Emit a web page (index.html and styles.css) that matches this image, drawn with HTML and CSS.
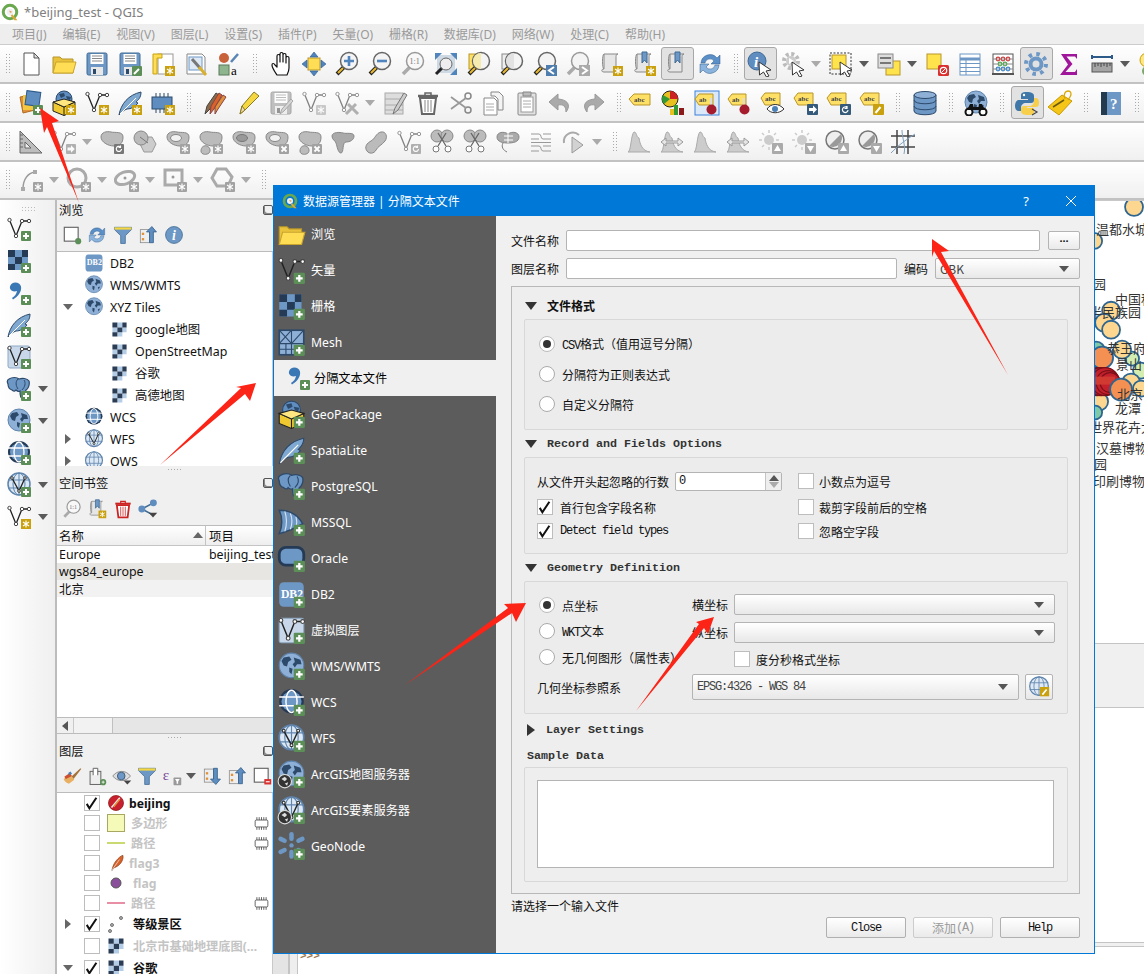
FILE: index.html
```html
<!DOCTYPE html>
<html lang="zh">
<head>
<meta charset="utf-8">
<title>*beijing_test - QGIS</title>
<link rel="stylesheet" href="styles.css">
</head>
<body>
<svg class="defs" aria-hidden="true"><defs>
<g id="ad"><rect x="15" y="15" width="10" height="10" rx="1" fill="#5c8f58"/><path d="M20 17v6M17 20h6" stroke="#fff" stroke-width="2"/></g>
<g id="st"><rect x="15" y="15" width="10" height="10" fill="#c9a00d"/><path d="M20 16.5v7M17 18l6 4M23 18l-6 4" stroke="#fff" stroke-width="1.2"/></g>
<g id="gs"><rect x="15" y="15" width="10" height="10" rx="1" fill="#a2a2a2"/><path d="M20 16.5v7M17 18l6 4M23 18l-6 4" stroke="#fff" stroke-width="1.2"/></g>
<g id="gx"><rect x="15" y="15" width="10" height="10" rx="1" fill="#a2a2a2"/><path d="M17.5 17.5l5 5M22.5 17.5l-5 5" stroke="#fff" stroke-width="1.8"/></g>
<g id="gr"><rect x="15" y="15" width="10" height="10" rx="1" fill="#777"/><path d="M22.5 20a2.6 2.6 0 1 1-1-2.2M21.5 16.5v2h-2" stroke="#fff" stroke-width="1.2" fill="none"/></g>
<g id="gar"><rect x="15" y="15" width="10" height="10" rx="1" fill="#777"/><path d="M16.5 18.5h3.5v-2.3l3.8 3.8-3.8 3.8v-2.3h-3.5z" fill="#fff"/></g>
<g id="new"><path d="M6 2h10l5 5v17H6z" fill="#fff" stroke="#555"/><path d="M16 2v5h5z" fill="#ddd" stroke="#555"/></g>
<g id="open"><path d="M2 22V6h7l2 2h11v14z" fill="#e8c23a" stroke="#b8952a"/><path d="M2 22l3-11h20l-3 11z" fill="#ffdd55" stroke="#c9a52e"/></g>
<g id="save"><rect x="3" y="2" width="20" height="22" rx="1.5" fill="#6d97c4" stroke="#3f6a94"/><rect x="6.5" y="3" width="13" height="10" fill="#fff"/><path d="M8 5h10M8 7.5h10M8 10h10" stroke="#888"/><rect x="7" y="16" width="12" height="8" fill="#e8e8e8"/><rect x="9" y="18" width="3" height="5" fill="#2d4a6b"/></g>
<g id="saveas"><use href="#save"/><rect x="15" y="15" width="10" height="10" rx="1" fill="#5c8f58"/><path d="M17 23l5-5" stroke="#fff" stroke-width="2"/></g>
<g id="layout"><rect x="8" y="3" width="15" height="20" fill="#fff" stroke="#999"/><path d="M3 3h9v4H7v16H3z" fill="#ffdd55" stroke="#c9a20c"/><use href="#st"/></g>
<g id="manager"><path d="M4 3h15l3 3v17H4z" fill="#fff" stroke="#888"/><rect x="6" y="6" width="13" height="13" fill="#dfe9f5" stroke="#6d97c4"/><path d="M9 8l8 9" stroke="#777" stroke-width="3"/><path d="M16 16l7 8" stroke="#d8b030" stroke-width="3"/></g>
<g id="style"><circle cx="8" cy="7" r="5" fill="#c8623a"/><path d="M15 11l7-8" stroke="#5a86b5" stroke-width="2.5"/><rect x="3" y="14" width="10" height="10" fill="#8fb58f" stroke="#5a7a5a"/><text x="15" y="24" class="ic" font-size="13">a</text></g>
<g id="pan"><path d="M9 24c-2-3-5-7-5-10 0-2 2-2 3 0l2 2V5c0-2 3-2 3 0v6V3c0-2 3-2 3 0v8V4c0-2 3-2 3 0v8V7c0-2 3-2 3 0v10c0 3-1 5-2 7z" fill="#fff" stroke="#111" stroke-width="1.2" stroke-linejoin="round"/></g>
<g id="move"><rect x="7" y="7" width="12" height="12" fill="#ffdd55" stroke="#b8952a"/><path d="M13 1l4 5H9zM13 25l4-5H9zM1 13l5-4v8zM25 13l-5-4v8z" fill="#4f84bd" stroke="#2d5a88" stroke-width=".6"/></g>
<g id="lens"><path d="M10 16l-7 7" stroke="#222" stroke-width="4"/><path d="M9 17l-5 5" stroke="#e5b830" stroke-width="2.2"/><circle cx="15" cy="10" r="8.5" fill="#f4f4f4" stroke="#666" stroke-width="1.5"/></g>
<g id="zin"><use href="#lens"/><path d="M15 5v10M10 10h10" stroke="#4f84bd" stroke-width="2.6"/></g>
<g id="zout"><use href="#lens"/><path d="M10 10h10" stroke="#4f84bd" stroke-width="2.6"/></g>
<g id="z11"><path d="M10 16l-7 7" stroke="#aaa" stroke-width="3.5"/><circle cx="15" cy="10" r="8.5" fill="#f8f8f8" stroke="#999" stroke-width="1.5"/><text x="9.500" y="13" class="ic" font-size="8" fill="#777">1:1</text></g>
<g id="zfull"><rect x="4" y="4" width="18" height="18" fill="#cfd9e4"/><path d="M2 2h7L2 9zM24 2h-7l7 7zM24 24h-7l7-7z" fill="#4f84bd"/><path d="M9 17l-6 6" stroke="#222" stroke-width="3"/><circle cx="13" cy="13" r="6" fill="#eee" stroke="#666"/></g>
<g id="zlayer"><rect x="3" y="3" width="13" height="15" fill="#ffe066" stroke="#b8952a"/><use href="#lens"/><path d="M15 2a8 8 0 0 0 0 16z" fill="#f5eab0"/></g>
<g id="zsel"><rect x="3" y="3" width="13" height="15" fill="#eee" stroke="#888"/><use href="#lens"/><path d="M15 2a8 8 0 0 0 0 16z" fill="#e2e2e2"/></g>
<g id="zlast"><use href="#lens"/><rect x="14" y="14" width="11" height="11" fill="#4f7eae"/><path d="M22 16l-5 3.500 5 3.500" fill="none" stroke="#fff" stroke-width="2"/></g>
<g id="znext"><path d="M10 16l-7 7" stroke="#aaa" stroke-width="3.500"/><circle cx="15" cy="10" r="8.500" fill="#f4f4f4" stroke="#999" stroke-width="1.500"/><rect x="14" y="14" width="11" height="11" fill="#aaa"/><path d="M17 16l5 3.500-5 3.500" fill="none" stroke="#fff" stroke-width="2"/></g>
<g id="scroll"><path d="M6 3h14c-2 0-2 2-2 4v14H6c-3 0-3-3 0-3h0z" fill="#e6e6e6" stroke="#888"/><path d="M6 3c-2 0-2 15 0 15" fill="none" stroke="#888"/></g>
<g id="mapnew"><use href="#scroll"/><use href="#st"/></g>
<g id="bkshow"><use href="#scroll"/><path d="M11 1h5v11l-2.500-3-2.500 3z" fill="#6d97c4" stroke="#3f6a94"/></g>
<g id="bknew"><use href="#bkshow"/><use href="#st"/></g>
<g id="refresh"><path d="M4 12a9 9 0 0 1 16-5l3-3v9h-9l3-3a5 5 0 0 0-9 2z" fill="#5b8fc7" stroke="#2d5a88" stroke-width=".5"/><path d="M22 14a9 9 0 0 1-16 5l-3 3v-9h9l-3 3a5 5 0 0 0 9-2z" fill="#8ab4dd" stroke="#2d5a88" stroke-width=".5"/></g>
<g id="cursor"><path d="M12 11l12 8-5 1 3 5-2.500 1-3-5-4 3z" fill="#fff" stroke="#333"/></g>
<g id="identify"><circle cx="10" cy="10" r="9" fill="#5f8dc0" stroke="#3f6a94"/><text x="7" y="16" class="ic iw ii" font-size="15">i</text><use href="#cursor"/></g>
<g id="action"><circle cx="11" cy="10" r="7" fill="none" stroke="#bbb" stroke-width="4" stroke-dasharray="3 2.500"/><circle cx="11" cy="10" r="5" fill="#ccc"/><path d="M9 7l5 3-5 3z" fill="#fff"/><use href="#cursor"/></g>
<g id="select"><rect x="2" y="2" width="21" height="21" fill="none" stroke="#333" stroke-dasharray="2 1.500"/><rect x="4" y="4" width="14" height="14" fill="#ffe34d" stroke="#b8952a"/><use href="#cursor"/></g>
<g id="selattr"><rect x="10" y="10" width="14" height="14" fill="#ffe34d" stroke="#b8952a"/><rect x="2" y="3" width="15" height="14" fill="#ddd" stroke="#888"/><path d="M4 7h11M4 12h11" stroke="#777" stroke-width="2"/></g>
<g id="desel"><rect x="3" y="3" width="14" height="15" fill="#ffe34d" stroke="#b8952a"/><rect x="14" y="14" width="11" height="11" rx="1.500" fill="#d93030"/><circle cx="19.500" cy="19.500" r="3.200" fill="none" stroke="#fff" stroke-width="1.200"/><path d="M17.500 21.500l4-4" stroke="#fff"/></g>
<g id="table"><rect x="3" y="3" width="20" height="21" fill="#fff" stroke="#6d97c4"/><path d="M3 8h20" stroke="#6d97c4" stroke-width="3"/><path d="M3 12.500h20M3 16.500h20M3 20.500h20M9 8v16" stroke="#6d97c4"/></g>
<g id="abacus"><rect x="3" y="3" width="20" height="20" fill="#fff" stroke="#555"/><path d="M3 8h20M3 13h20M3 18h20" stroke="#888"/><g fill="none" stroke-width="1.200"><circle cx="8" cy="8" r="1.800" stroke="#c44"/><circle cx="13" cy="8" r="1.800" stroke="#c44"/><circle cx="18" cy="8" r="1.800" stroke="#c44"/><circle cx="10" cy="13" r="1.800" stroke="#5a5"/><circle cx="15" cy="13" r="1.800" stroke="#5a5"/><circle cx="8" cy="18" r="1.800" stroke="#48c"/><circle cx="13" cy="18" r="1.800" stroke="#48c"/><circle cx="18" cy="18" r="1.800" stroke="#48c"/></g><rect x="2" y="22" width="22" height="2" fill="#555"/></g>
<g id="gear"><circle cx="13" cy="13" r="10" fill="none" stroke="#6d97c4" stroke-width="4" stroke-dasharray="3.500 4.350"/><circle cx="13" cy="13" r="7.500" fill="#6d97c4"/><circle cx="13" cy="13" r="3.500" fill="#e2e2e2"/></g>
<g id="sigma"><path d="M5 3h16v5l-2-2.500H10.500l6 7.500-7 8H19l2-3v6H4l8-10.500z" fill="#a0169a"/></g>
<g id="measure"><rect x="3" y="12" width="20" height="9" fill="#a5a5a5" stroke="#555"/><path d="M6 12v4M9 12v3M12 12v4M15 12v3M18 12v4M21 12v3" stroke="#444"/><path d="M3 6h20M3 4v4M23 4v4" stroke="#2d5a88" stroke-width="2"/></g>
<g id="tip"><circle cx="10" cy="9" r="7" fill="#ffe680" stroke="#c9a20c"/><circle cx="10" cy="20" r="5" fill="#7ca86a"/></g>
<g id="dsm"><path d="M2 7l12-2 3 15-12 3z" fill="#e0913a" stroke="#b06a20"/><path d="M5 5h11v15H5z" fill="#f5c842"/><rect x="8" y="1.500" width="14" height="14" transform="rotate(8 15 8)" fill="#5f8dc0" stroke="#2d5a88"/><use href="#ad"/></g>
<g id="globe"><circle cx="13" cy="12" r="11" fill="#8fb0d6" stroke="#5f84ad"/><path d="M6 5l5-1 2 3-3 2-1 4-3-1-2-4zM15 5l6 2 1 4-4 0-2 3-2-3 2-2zM11 14l3 1-1 5-2-2zM18 16l3-1-2 4z" fill="#2d4a6b"/></g>
<g id="gpkg"><circle cx="13" cy="9" r="8" fill="#5f8dc0" stroke="#2d4a6b"/><path d="M8 4l5-1 1 3-4 2zM15 6l5 1-1 3-3-1z" fill="#2d4a6b"/><path d="M2 12l11 5 11-5v9l-11 4.500L2 21z" fill="#f0c830" stroke="#222"/><path d="M2 12l11-3 11 3-11 5z" fill="#ffe680" stroke="#222"/><path d="M13 17v8.500" stroke="#222"/></g>
<g id="vec"><path d="M3.500 4L10 20l6-15h7" fill="none" stroke="#222" stroke-width="1.300"/><g fill="#fff" stroke="#444"><circle cx="3.500" cy="4" r="1.700"/><circle cx="10" cy="20" r="1.700"/><circle cx="16" cy="5" r="1.700"/><circle cx="23" cy="5" r="1.700"/></g></g>
<g id="feather"><path d="M2 25C4 14 11 5 24 2c0 6-3 8-5 10l2 1c-3 4-7 6-11 6-3 1-6 3-8 6z" fill="#7fa8d0" stroke="#2d4a6b"/><path d="M3 24L19 8" stroke="#fff"/></g>
<g id="chip"><path d="M6 3v20M10 3v20M14 3v20M18 3v20" stroke="#2d4a6b"/><rect x="2" y="7" width="20" height="12" fill="#5f8dc0" stroke="#2d4a6b"/></g>
<g id="pencils"><path d="M3 24l2-8 9-13 3 2-9 14z" fill="#8a6a4a" stroke="#444"/><path d="M8 24l1-8 8-13 3 2-8 14z" fill="#d8622a" stroke="#844"/><path d="M13 24l0-7 8-12 3 2-8 12z" fill="#e0913a" stroke="#844"/></g>
<g id="pencil"><path d="M5 24l2-8L19 2l5 4L10 20z" fill="#f5d742" stroke="#8a7a20"/><path d="M5 24l2-8 3 4z" fill="#f0dcb0" stroke="#8a7a20"/></g>
<g id="gsave"><use href="#save"/><path d="M12 24l2-5 9-10 2 2-9 10z" fill="#bbb" stroke="#666"/></g>
<g id="nodes"><use href="#vec"/><use href="#gs"/></g>
<g id="tools"><use href="#vec"/><path d="M12 24l10-10M14 14l10 10" stroke="#777" stroke-width="3"/></g>
<g id="elines"><rect x="3" y="3" width="18" height="21" fill="#ddd" stroke="#aaa"/><path d="M3 9h18M3 15h18M3 20h18" stroke="#aaa"/><path d="M11 24l2-6 9-15 3 2-9 15z" fill="#ccc" stroke="#777"/></g>
<g id="trash"><path d="M5 8h16l-2 16H7z" fill="#fff" stroke="#666" stroke-width="2"/><path d="M3 6h20" stroke="#666" stroke-width="2.500"/><path d="M10 3h6v3h-6z" fill="none" stroke="#666" stroke-width="1.500"/><path d="M10 10v12M13 10v12M16 10v12" stroke="#888"/></g>
<g id="scis"><circle cx="20" cy="6" r="3" fill="none" stroke="#888" stroke-width="1.500"/><circle cx="20" cy="20" r="3" fill="none" stroke="#888" stroke-width="1.500"/><path d="M3 7l15 11M3 19L18 8" stroke="#999" stroke-width="1.800"/></g>
<g id="copy"><path d="M3 8h10l3 3v14H3z" fill="#fff" stroke="#888"/><path d="M10 2h8l4 4v14h-5V9l-3-3h-4z" fill="#f4f4f4" stroke="#888"/><path d="M5 14h8M5 17h8M5 20h8" stroke="#aaa"/></g>
<g id="paste"><rect x="4" y="3" width="18" height="22" rx="1" fill="#e2e2e2" stroke="#888"/><rect x="7" y="7" width="12" height="15" fill="#fff" stroke="#999"/><path d="M9 2h8v4H9z" fill="#bbb" stroke="#888"/><path d="M9 11h8M9 14h8M9 17h8" stroke="#aaa"/></g>
<g id="undo"><path d="M11 4L2 12l9 8v-5c5-1 8 1 8 7 4-5 4-12-8-13z" fill="#aaa" stroke="#999"/></g>
<g id="redo"><path d="M15 4l9 8-9 8v-5c-5-1-8 1-8 7-4-5-4-12 8-13z" fill="#aaa" stroke="#999"/></g>
<g id="abc"><path d="M1 9l5-5h16v11H6z" fill="#ffe066" stroke="#b8952a"/><text x="6" y="12" class="ic" font-size="7" font-weight="700" fill="#444">abc</text></g>
<g id="abcb"><path d="M1 8l4-5h15v12H5z" fill="#ffe066" stroke="#b8952a"/><text x="5" y="11" class="ic" font-size="7" font-weight="700" fill="#444">abc</text></g>
<g id="pie"><circle cx="9" cy="9" r="8" fill="#e8c020" stroke="#222"/><path d="M9 9V1a8 8 0 0 1 8 8z" fill="#c22"/><path d="M9 9L3 14a8 8 0 0 1-1-9z" fill="#393"/><rect x="13" y="15" width="4" height="10" fill="#393"/><rect x="9" y="19" width="4" height="6" fill="#e8c020"/><rect x="18" y="18" width="5" height="7" fill="#8b1a1a"/></g>
<g id="abcp"><rect x="1" y="1" width="24" height="24" fill="#dbe8f8" stroke="#3b82d8"/><use href="#abct"/></g>
<g id="abct"><path d="M1 9l4-5h14v11H5z" fill="#ffe066" stroke="#b8952a"/><text x="5" y="12" class="ic" font-size="7" font-weight="700" fill="#444">ab</text><path d="M17 8v9" stroke="#ddd" stroke-width="2"/><circle cx="17.500" cy="19.500" r="5" fill="#a51d2d"/></g>
<g id="abce"><use href="#abcb"/><path d="M7 19c4-6 12-6 17 0-5 5-13 5-17 0z" fill="#fff" stroke="#333"/><circle cx="15" cy="19" r="3" fill="#4a7fb5"/></g>
<g id="abca"><use href="#abcb"/><rect x="14" y="14" width="11" height="11" rx="1" fill="#365a7a"/><path d="M16 18h4v-2.500l4 4-4 4V21h-4z" fill="#fff"/></g>
<g id="abcr"><use href="#abcb"/><rect x="14" y="14" width="11" height="11" rx="1" fill="#365a7a"/><path d="M22 20a2.800 2.800 0 1 1-1-2.400M21 16v2.500h-2.500" stroke="#fff" stroke-width="1.200" fill="none"/></g>
<g id="abcd"><use href="#abcb"/><rect x="14" y="14" width="11" height="11" rx="1" fill="#c9a00d"/><path d="M16.500 23l5-6" stroke="#fff" stroke-width="2"/></g>
<g id="db"><path d="M2 5v16c0 5 22 5 22 0V5z" fill="#6d97c4" stroke="#2d4a6b"/><ellipse cx="13" cy="5" rx="11" ry="3.500" fill="#8fb0d6" stroke="#2d4a6b"/><path d="M2 10c0 5 22 5 22 0M2 16c0 5 22 5 22 0" fill="none" stroke="#2d4a6b"/></g>
<g id="gbin"><use href="#globe"/><circle cx="6" cy="22" r="3.500" fill="#fff" stroke="#111" stroke-width="2"/><circle cx="20" cy="22" r="3.500" fill="#fff" stroke="#111" stroke-width="2"/><path d="M7 14h3l1 6H4zM19 14h-3l-1 6h7z" fill="#111"/><rect x="9" y="17" width="8" height="3" fill="#111"/></g>
<g id="py"><path d="M13 2c-6 0-6 2-6 4v3h7v1H5c-3 0-4 3-4 6 0 4 2 5 4 5h2v-3c0-3 2-5 5-5h5c2 0 3-1 3-3V6c0-3-3-4-7-4z" fill="#3f78a8"/><path d="M14 25c6 0 6-2 6-4v-3h-7v-1h9c3 0 3-3 3-5s-1-4-3-4h-2v3c0 3-2 5-5 5H10c-2 0-3 1-3 3v2c0 3 3 4 7 4z" fill="#f7cf4a"/><circle cx="10" cy="5" r="1.200" fill="#fff"/><path d="M18 19l5 3-5 3" fill="none" stroke="#444" stroke-width="1.200"/></g>
<g id="tag"><path d="M1 17L15 5l10 6-13 14z" fill="#f5c518" stroke="#c99a00"/><path d="M6 17l11-7" stroke="#6a5a10" stroke-width="1.500"/><path d="M18 9c-2-4 0-8 3-8s4 3 2 6l-2 3" fill="none" stroke="#d8a800" stroke-width="1.300"/></g>
<g id="help"><rect x="3" y="2" width="20" height="23" fill="#6d97c4"/><rect x="3" y="2" width="6" height="23" fill="#243a4f"/><text x="12" y="19" class="ic iw" font-size="15">?</text></g>
<g id="ruler"><path d="M2 2v22h22z" fill="#bdbdbd" stroke="#666"/><path d="M7 13v6h6z" fill="#eee" stroke="#666"/><path d="M2 6h3M2 10h3M2 14h3M2 18h3" stroke="#666"/></g>
<g id="nodear"><use href="#vec"/><use href="#gar"/></g>
<path id="blob" d="M2 8c0-5 6-6 10-5s12-1 12 5-3 9-9 9-13-4-13-9z" fill="#bbb" stroke="#888"/>
<g id="brot"><use href="#blob"/><use href="#gr"/></g>
<g id="hex"><path d="M12 8l8 0 4 7-4 8h-8l-4-8z" fill="#ccc" stroke="#999"/><circle cx="9" cy="9" r="7" fill="#bbb" stroke="#888"/><path d="M8 8l8 6" stroke="#777"/></g>
<g id="bring"><use href="#blob"/><ellipse cx="11" cy="9" rx="5.500" ry="3.500" fill="#f2f2f2" stroke="#888"/><use href="#gs"/></g>
<g id="bpart"><use href="#blob"/><path d="M3 22c0-4 3-6 6-5s4 5 2 7-8 2-8-2z" fill="#bbb" stroke="#888"/><use href="#gs"/></g>
<g id="bfill"><use href="#blob"/><ellipse cx="11" cy="9" rx="5.500" ry="3.500" fill="#999" stroke="#777"/><use href="#gs"/></g>
<g id="brx"><use href="#blob"/><ellipse cx="11" cy="9" rx="5.500" ry="3.500" fill="#f2f2f2" stroke="#888"/><use href="#gx"/></g>
<g id="bpx"><use href="#blob"/><path d="M3 22c0-4 3-6 6-5s4 5 2 7-8 2-8-2z" fill="#bbb" stroke="#888"/><use href="#gx"/></g>
<g id="resh"><path d="M2 7c0-4 8-4 11-3s11-1 11 3-4 6-8 6-2 11-5 11-4-7-5-10-4-3-4-7z" fill="#aaa" stroke="#888"/></g>
<g id="offs"><path d="M4 22c-3-4 0-8 4-10s5-8 10-9 7 5 4 9-7 5-9 9-7 4-9 1z" fill="#bbb" stroke="#888"/></g>
<g id="vrot"><use href="#vec"/><use href="#gr"/></g>
<g id="spl"><circle cx="8" cy="7" r="6" fill="#bbb" stroke="#888"/><circle cx="18" cy="7" r="6" fill="#bbb" stroke="#888"/><path d="M9 4l8 13M17 4L9 17" stroke="#666" stroke-width="1.300"/><circle cx="7" cy="20" r="3" fill="#fff" stroke="#777"/><circle cx="19" cy="20" r="3" fill="#fff" stroke="#777"/></g>
<g id="merge"><path d="M2 8c0-5 7-6 11-3 4-3 11-2 11 3s-6 6-11 6S2 13 2 8z" fill="#aaa" stroke="#888"/><path d="M13 4v10M9 7h9M9 11h9" stroke="#fff"/><path d="M8 14c-2 4 0 7 4 9" fill="none" stroke="#777"/></g>
<g id="lines"><path d="M3 5h8M15 5h8M3 10h8M15 10h8M3 17h8M15 17h8M3 22h8M15 22h8M11 5c3 0 1 5 4 5M11 17c3 0 1 5 4 5M3 13.500h20" stroke="#999" fill="none"/></g>
<g id="rotp"><path d="M3 14a9 9 0 0 1 15-8" stroke="#aaa" stroke-width="2" fill="none"/><path d="M11 8l11 8-11 8z" fill="#d2d2d2" stroke="#999"/></g>
<g id="hist"><path d="M2 23c3 0 3-18 6-20 3 0 2 5 5 6 1 6 3 13 11 14z" fill="#ccc" stroke="#aaa"/></g>
<g id="hist2"><use href="#hist"/><path d="M2 13l5-4v3h12V9l5 4-5 4v-3H7v3z" fill="#e6e6e6" stroke="#999"/></g>
<g id="sun"><circle cx="11" cy="11" r="5" fill="#ccc"/><path d="M11 1v3M11 18v3M1 11h3M18 11h3M4 4l2 2M18 4l-2 2M4 18l2-2" stroke="#ccc" stroke-width="1.500"/></g>
<g id="sunu"><use href="#sun"/><rect x="14" y="14" width="11" height="11" rx="1" fill="#aaa"/><path d="M19.500 16l3.500 6h-7z" fill="#fff"/></g>
<g id="sund"><use href="#sun"/><rect x="14" y="14" width="11" height="11" rx="1" fill="#aaa"/><path d="M19.500 23l3.500-6h-7z" fill="#fff"/></g>
<g id="con"><circle cx="11" cy="11" r="9" fill="#eee" stroke="#777" stroke-width="1.500"/><path d="M17 5a9 9 0 0 1-12 12z" fill="#999"/></g>
<g id="conu"><use href="#con"/><rect x="14" y="14" width="11" height="11" rx="1" fill="#aaa"/><path d="M19.500 16l3.500 6h-7z" fill="#fff"/></g>
<g id="cond"><use href="#con"/><rect x="14" y="14" width="11" height="11" rx="1" fill="#aaa"/><path d="M19.500 23l3.500-6h-7z" fill="#fff"/></g>
<g id="gridc"><path d="M7 1v24M18 1v24M1 7h24M1 18h24" stroke="#444" stroke-width="1.500"/><path d="M1 24c6-6 10-10 24-19M12 1c0 8 4 16 2 24" stroke="#7fa3c2" fill="none"/></g>
<g id="arc"><path d="M5 22C5 12 10 6 17 5" fill="none" stroke="#999" stroke-width="1.500"/><rect x="3" y="20" width="4" height="4" fill="#aaa"/><rect x="15" y="3" width="4" height="4" fill="#aaa"/><use href="#gs"/></g>
<g id="circ"><circle cx="11" cy="11" r="9" fill="none" stroke="#aaa" stroke-width="3"/><use href="#gs"/></g>
<g id="ell"><ellipse cx="11" cy="11" rx="10" ry="6" transform="rotate(-20 11 11)" fill="none" stroke="#aaa" stroke-width="3"/><circle cx="11" cy="11" r="1.500" fill="#999"/><use href="#gs"/></g>
<g id="rct"><rect x="3" y="3" width="17" height="15" fill="none" stroke="#aaa" stroke-width="3"/><circle cx="11" cy="10" r="1.500" fill="#999"/><use href="#gs"/></g>
<g id="reg"><path d="M7 2h9l6 8-4 9H7l-5-8z" fill="none" stroke="#aaa" stroke-width="3"/><use href="#gs"/></g>
<g id="raster"><rect x="2" y="2" width="20" height="20" fill="#6d97c4"/><path d="M2 2h7v7H2zM16 2h6v7h-6zM9 9h7v7H9zM2 16h7v6H2z" fill="#243a55"/><path d="M16 16h6v6h-6z" fill="#6d97c4"/></g>
<g id="rl"><path d="M9 2h7v7H9zM2 9h7v7H2zM16 9h6v7h-6zM9 16h7v6H9z" fill="#b4cde6"/><path d="M2 2h7v7H2zM16 2h6v7h-6zM9 9h7v7H9zM2 16h7v6H2z" fill="#2b3d55"/></g>
<g id="delim"><path d="M6 3.500c3-2 8-1 9 3 1 5-3 10-8 13l-1-1.500c3-2 4.500-4 5-7-3 1-6 0-7-2.500-.5-2 .5-4 2-5z" fill="#3a78b5"/></g>
<g id="mesh"><rect x="2" y="2" width="22" height="22" fill="#8fb0d6" stroke="#2d4a6b" stroke-width="1.500"/><path d="M2 14h22M13 2v22M2 2l11 12M13 2L2 14M24 2L13 14M2 19h11M8 14v10M13 19h11" stroke="#2d4a6b"/></g>
<g id="pg"><path d="M3 3c3-2 8-2 10 0 3-1 8-1 10 2 1 4-1 8-3 9-1 3-1 8-4 8-2 0-2-4-2-7-2 1-3 0-4-1-1 2-3 1-4 0-3-1-4-4-4-6-1-2-1-4 1-5z" fill="#6d97c4" stroke="#2d4a6b" stroke-width="1.200"/><path d="M12 3c-3 3-2 7 0 10M18 4c2 3 1 7-2 10" fill="none" stroke="#2d4a6b"/></g>
<g id="mssql"><path d="M2 2c8 0 16 3 21 12-5 3-13 7-21 9 3-6 3-15 0-21z" fill="#6d97c4" stroke="#2d4a6b" stroke-width="1.300"/><path d="M7 3c2 6 2 12 0 18M12 5c2 5 2 9 0 14M17 8c1 3 1 6 0 9" stroke="#d8e4f0" fill="none"/></g>
<g id="oracle"><rect x="2" y="3" width="22" height="16" rx="6" fill="#6d97c4" stroke="#243a55" stroke-width="2.500"/></g>
<g id="db2"><rect x="2" y="2" width="22" height="22" rx="4" fill="#6d97c4"/><text x="3.500" y="16" class="ic iw" font-size="10.500">DB2</text></g>
<g id="virt"><rect x="2" y="2" width="22" height="22" rx="2" fill="#c8d8ea" stroke="#8fa8c2"/><use href="#vec"/></g>
<g id="gwcs"><circle cx="13" cy="12" r="11" fill="#243a55"/><circle cx="13" cy="12" r="9" fill="#6d97c4"/><path d="M2 8h22M2 16h22" stroke="#fff" stroke-width="1.300"/><ellipse cx="13" cy="12" rx="5" ry="10" fill="none" stroke="#fff" stroke-width="1.300"/></g>
<g id="gwf"><circle cx="13" cy="12" r="11" fill="#dce8f4" stroke="#5f84ad" stroke-width="1.500"/><path d="M2 8h22M2 16h22M13 1v22" stroke="#5f84ad"/><ellipse cx="13" cy="12" rx="6" ry="11" fill="none" stroke="#5f84ad"/></g>
<g id="gwfs"><use href="#gwf"/><path d="M6 6l7 13 6-13" fill="none" stroke="#222" stroke-width="1.300"/><circle cx="6" cy="6" r="1.300" fill="#fff" stroke="#333"/><circle cx="13" cy="19" r="1.300" fill="#fff" stroke="#333"/><circle cx="19" cy="6" r="1.300" fill="#fff" stroke="#333"/></g>
<g id="arcb"><circle cx="7" cy="19" r="6" fill="#333" stroke="#ddd"/><path d="M4 17l3-2 2 2-2 2zM7 21l3-1-1 3z" fill="#ddd"/></g>
<g id="geon"><circle cx="13" cy="12" r="2" fill="#6d97c4"/><rect x="11" y="0" width="4" height="8" rx="2" fill="#6d97c4"/><rect x="11" y="16" width="4" height="8" rx="2" fill="#6d97c4"/><rect x="1" y="5" width="8" height="4" rx="2" fill="#6d97c4" transform="rotate(25 5 7)"/><rect x="17" y="15" width="8" height="4" rx="2" fill="#6d97c4" transform="rotate(25 21 17)"/><rect x="1" y="15" width="8" height="4" rx="2" fill="#6d97c4" transform="rotate(-25 5 17)"/><rect x="17" y="5" width="8" height="4" rx="2" fill="#6d97c4" transform="rotate(-25 21 7)"/></g>
<g id="filter"><path d="M2 3h22v3l-8 8v10h-6V14L2 6z" fill="#6d97c4" stroke="#3f6a94"/><path d="M2 3h22v3H2z" fill="#f5d742"/></g>
<g id="collapse"><rect x="3" y="6" width="12" height="17" fill="#eee" stroke="#888"/><rect x="5" y="10" width="3" height="3" fill="#e0913a"/><rect x="5" y="17" width="3" height="3" fill="#e0913a"/><path d="M18 2l6 7h-4v14h-5V9h-4z" fill="#5f8dc0" stroke="#2d5a88"/></g>
<g id="expand"><rect x="3" y="4" width="12" height="17" fill="#eee" stroke="#888"/><rect x="5" y="8" width="3" height="3" fill="#e0913a"/><rect x="5" y="15" width="3" height="3" fill="#e0913a"/><path d="M18 24l6-7h-4V3h-5v14h-4z" fill="#5f8dc0" stroke="#2d5a88"/></g>
<g id="info"><circle cx="13" cy="13" r="11" fill="#6d97c4" stroke="#3f6a94"/><text x="10.500" y="20" class="ic iw ii" font-size="18">i</text></g>
<g id="nsq"><rect x="3" y="3" width="18" height="18" fill="#fff" stroke="#666" stroke-width="1.500"/><circle cx="21" cy="21" r="4" fill="#5c8f58"/></g>
<g id="nsqr"><rect x="3" y="3" width="18" height="18" fill="#fff" stroke="#666" stroke-width="1.500"/><rect x="16" y="17" width="9" height="7" fill="#d93030"/><path d="M18 20.500h5" stroke="#fff" stroke-width="1.500"/></g>
<g id="share"><path d="M5 13L20 5M5 13l15 8" stroke="#3f6a94" stroke-width="2"/><circle cx="5" cy="13" r="4.500" fill="#5f8dc0"/><circle cx="20" cy="5" r="4.500" fill="#5f8dc0"/><path d="M14 18h11l-5.500 6z" fill="#444"/></g>
<g id="trashr"><path d="M5 8h16l-2 16H7z" fill="#fff" stroke="#c22" stroke-width="2.300"/><path d="M3 6h20" stroke="#c22" stroke-width="2.500"/><path d="M10 3h6v3h-6z" fill="none" stroke="#c22" stroke-width="1.500"/><path d="M10 10v12M13 10v12M16 10v12" stroke="#c22"/></g>
<g id="brush"><path d="M12 14L24 3l1 1-10 13z" fill="#a5733a"/><path d="M2 17l9-6 5 7-7 5c-3-1-6-3-7-6z" fill="#e8b060"/><path d="M3 14l7-5 3 4-8 4z" fill="#cc5030"/><path d="M8 9l3-2 2 3-3 2z" fill="#4a7fb5"/></g>
<g id="addgrp"><rect x="4" y="7" width="14" height="17" fill="#eee" stroke="#666" stroke-width="1.300"/><path d="M8 12V3h6v9" fill="#fff" stroke="#666" stroke-width="1.300"/><circle cx="21" cy="21" r="4" fill="#5c8f58"/><path d="M21 19v4M19 21h4" stroke="#fff"/></g>
<g id="eye"><path d="M1 13c6-8 17-8 23 0-6 8-17 8-23 0z" fill="#ddd" stroke="#777"/><circle cx="12" cy="13" r="5" fill="#6d97c4" stroke="#2d4a6b"/><path d="M15 19h10l-5 5z" fill="#444"/></g>
<g id="eps"><text x="1" y="18" class="ic" font-size="20" fill="#7b4a9a">ε</text><rect x="15" y="15" width="10" height="10" rx="1" fill="#999"/><path d="M17 17h6l-2 3v3h-2v-3z" fill="#fff"/></g>
<g id="feat"><path d="M7 24c1-4 2-9 6-14s8-8 10-8c1 4-1 8-3 11-3 4-7 6-10 7z" fill="#d8622a" stroke="#8a3a10"/><path d="M6 25L18 8" stroke="#eee"/></g>
<g id="ptb"><circle cx="12" cy="12" r="10" fill="#c8202c" stroke="#8b1a1a"/><path d="M6 18L17 5" stroke="#eee" stroke-width="2"/><path d="M9 17l8-10" stroke="#e0913a" stroke-width="2"/></g>
<g id="chipg"><path d="M5 2v22M9 2v22M13 2v22M17 2v22M21 2v22" stroke="#444" stroke-width="1.400"/><rect x="2" y="7" width="22" height="12" rx="2" fill="#fff" stroke="#444" stroke-width="1.400"/></g>
<g id="q"><circle cx="12" cy="12" r="9" fill="none" stroke="#6aa84f" stroke-width="4"/><circle cx="12" cy="12" r="4.500" fill="#f0f0f0"/><path d="M11 10l4 2-3 1z" fill="#e0913a"/><path d="M15 15l7 8-4 0-5-6z" fill="#d8a838"/></g>
<g id="gedit"><use href="#gwf"/><rect x="14" y="13" width="11" height="11" fill="#c9a00d"/><path d="M17 22l5-6" stroke="#fff" stroke-width="2"/></g>
<path id="ck" d="M2 9l3 5 8-12" fill="none" stroke="#111" stroke-width="2.300"/>
</defs></svg>

<header class="title"><svg class="titleq" viewBox="0 0 24 24"><use href="#q"/></svg><span>*beijing_test - QGIS</span></header>
<nav class="menu">
<span>项目(J)</span><span>编辑(E)</span><span>视图(V)</span><span>图层(L)</span><span>设置(S)</span><span>插件(P)</span><span>矢量(O)</span><span>栅格(R)</span><span>数据库(D)</span><span>网络(W)</span><span>处理(C)</span><span>帮助(H)</span>
</nav>

<div class="bar">
<i class="grip first"></i>
<span class="t"><svg viewBox="0 0 26 26"><use href="#new"/></svg></span>
<span class="t"><svg viewBox="0 0 26 26"><use href="#open"/></svg></span>
<span class="t"><svg viewBox="0 0 26 26"><use href="#save"/></svg></span>
<span class="t"><svg viewBox="0 0 26 26"><use href="#saveas"/></svg></span>
<span class="t"><svg viewBox="0 0 26 26"><use href="#layout"/></svg></span>
<span class="t"><svg viewBox="0 0 26 26"><use href="#manager"/></svg></span>
<span class="t"><svg viewBox="0 0 26 26"><use href="#style"/></svg></span>
<i class="grip g19"></i>
<span class="t"><svg viewBox="0 0 26 26"><use href="#pan"/></svg></span>
<span class="t"><svg viewBox="0 0 26 26"><use href="#move"/></svg></span>
<span class="t"><svg viewBox="0 0 26 26"><use href="#zin"/></svg></span>
<span class="t"><svg viewBox="0 0 26 26"><use href="#zout"/></svg></span>
<span class="t"><svg viewBox="0 0 26 26"><use href="#z11"/></svg></span>
<span class="t"><svg viewBox="0 0 26 26"><use href="#zfull"/></svg></span>
<span class="t"><svg viewBox="0 0 26 26"><use href="#zlayer"/></svg></span>
<span class="t"><svg viewBox="0 0 26 26"><use href="#zsel"/></svg></span>
<span class="t"><svg viewBox="0 0 26 26"><use href="#zlast"/></svg></span>
<span class="t"><svg viewBox="0 0 26 26"><use href="#znext"/></svg></span>
<span class="t"><svg viewBox="0 0 26 26"><use href="#mapnew"/></svg></span>
<span class="t"><svg viewBox="0 0 26 26"><use href="#bknew"/></svg></span>
<span class="t on"><svg viewBox="0 0 26 26"><use href="#bkshow"/></svg></span>
<span class="t"><svg viewBox="0 0 26 26"><use href="#refresh"/></svg></span>
<i class="grip g17"></i>
<span class="t on"><svg viewBox="0 0 26 26"><use href="#identify"/></svg></span>
<span class="t"><svg viewBox="0 0 26 26"><use href="#action"/></svg></span><i class="dd off"></i>
<span class="t"><svg viewBox="0 0 26 26"><use href="#select"/></svg></span><i class="dd"></i>
<span class="t"><svg viewBox="0 0 26 26"><use href="#selattr"/></svg></span><i class="dd"></i>
<span class="t"><svg viewBox="0 0 26 26"><use href="#desel"/></svg></span>
<span class="t"><svg viewBox="0 0 26 26"><use href="#table"/></svg></span>
<span class="t"><svg viewBox="0 0 26 26"><use href="#abacus"/></svg></span>
<span class="t on"><svg viewBox="0 0 26 26"><use href="#gear"/></svg></span>
<span class="t"><svg viewBox="0 0 26 26"><use href="#sigma"/></svg></span>
<span class="t"><svg viewBox="0 0 26 26"><use href="#measure"/></svg></span><i class="dd"></i>
<span class="t"><svg viewBox="0 0 26 26"><use href="#tip"/></svg></span>
</div>

<div class="bar">
<i class="grip first"></i>
<span class="t"><svg viewBox="0 0 26 26"><use href="#dsm"/></svg></span>
<span class="t"><svg viewBox="0 0 26 26"><use href="#gpkg"/><use href="#st"/></svg></span>
<span class="t"><svg viewBox="0 0 26 26"><use href="#vec"/><use href="#st"/></svg></span>
<span class="t"><svg viewBox="0 0 26 26"><use href="#feather"/><use href="#st"/></svg></span>
<span class="t"><svg viewBox="0 0 26 26"><use href="#chip"/><use href="#st"/></svg></span>
<i class="grip g19"></i>
<span class="t"><svg viewBox="0 0 26 26"><use href="#pencils"/></svg></span>
<span class="t"><svg viewBox="0 0 26 26"><use href="#pencil"/></svg></span>
<span class="t off"><svg viewBox="0 0 26 26"><use href="#gsave"/></svg></span>
<span class="t off"><svg viewBox="0 0 26 26"><use href="#nodes"/></svg></span>
<span class="t off"><svg viewBox="0 0 26 26"><use href="#tools"/></svg></span><i class="dd off"></i>
<span class="t"><svg viewBox="0 0 26 26"><use href="#elines"/></svg></span>
<span class="t"><svg viewBox="0 0 26 26"><use href="#trash"/></svg></span>
<span class="t"><svg viewBox="0 0 26 26"><use href="#scis"/></svg></span>
<span class="t"><svg viewBox="0 0 26 26"><use href="#copy"/></svg></span>
<span class="t"><svg viewBox="0 0 26 26"><use href="#paste"/></svg></span>
<span class="t"><svg viewBox="0 0 26 26"><use href="#undo"/></svg></span>
<span class="t"><svg viewBox="0 0 26 26"><use href="#redo"/></svg></span>
<i class="grip g15"></i>
<span class="t"><svg viewBox="0 0 26 26"><use href="#abc"/></svg></span>
<span class="t"><svg viewBox="0 0 26 26"><use href="#pie"/></svg></span>
<span class="t"><svg viewBox="0 0 26 26"><use href="#abcp"/></svg></span>
<span class="t"><svg viewBox="0 0 26 26"><use href="#abct"/></svg></span>
<span class="t"><svg viewBox="0 0 26 26"><use href="#abce"/></svg></span>
<span class="t"><svg viewBox="0 0 26 26"><use href="#abca"/></svg></span>
<span class="t"><svg viewBox="0 0 26 26"><use href="#abcr"/></svg></span>
<span class="t"><svg viewBox="0 0 26 26"><use href="#abcd"/></svg></span>
<i class="grip g20"></i>
<span class="t"><svg viewBox="0 0 26 26"><use href="#db"/></svg></span>
<i class="grip"></i>
<span class="t"><svg viewBox="0 0 26 26"><use href="#gbin"/></svg></span>
<i class="grip"></i>
<span class="t on"><svg viewBox="0 0 26 26"><use href="#py"/></svg></span>
<span class="t"><svg viewBox="0 0 26 26"><use href="#tag"/></svg></span>
<i class="grip"></i>
<span class="t"><svg viewBox="0 0 26 26"><use href="#help"/></svg></span>
<i class="grip"></i>
</div>

<div class="bar">
<i class="grip first"></i>
<span class="t"><svg viewBox="0 0 26 26"><use href="#ruler"/></svg></span>
<span class="t off"><svg viewBox="0 0 26 26"><use href="#nodear"/></svg></span><i class="dd off"></i>
<span class="t"><svg viewBox="0 0 26 26"><use href="#brot"/></svg></span>
<span class="t"><svg viewBox="0 0 26 26"><use href="#hex"/></svg></span>
<span class="t"><svg viewBox="0 0 26 26"><use href="#bring"/></svg></span>
<span class="t"><svg viewBox="0 0 26 26"><use href="#bpart"/></svg></span>
<span class="t"><svg viewBox="0 0 26 26"><use href="#bfill"/></svg></span>
<span class="t"><svg viewBox="0 0 26 26"><use href="#brx"/></svg></span>
<span class="t"><svg viewBox="0 0 26 26"><use href="#bpx"/></svg></span>
<span class="t"><svg viewBox="0 0 26 26"><use href="#resh"/></svg></span>
<span class="t"><svg viewBox="0 0 26 26"><use href="#offs"/></svg></span>
<span class="t off"><svg viewBox="0 0 26 26"><use href="#vrot"/></svg></span>
<span class="t"><svg viewBox="0 0 26 26"><use href="#spl"/></svg></span>
<span class="t"><svg viewBox="0 0 26 26"><use href="#spl"/></svg></span>
<span class="t"><svg viewBox="0 0 26 26"><use href="#merge"/></svg></span>
<span class="t"><svg viewBox="0 0 26 26"><use href="#lines"/></svg></span>
<span class="t"><svg viewBox="0 0 26 26"><use href="#rotp"/></svg></span><i class="dd off"></i>
<i class="grip g17"></i>
<span class="t"><svg viewBox="0 0 26 26"><use href="#hist"/></svg></span>
<span class="t"><svg viewBox="0 0 26 26"><use href="#hist2"/></svg></span>
<span class="t"><svg viewBox="0 0 26 26"><use href="#hist"/></svg></span>
<span class="t"><svg viewBox="0 0 26 26"><use href="#hist2"/></svg></span>
<span class="t"><svg viewBox="0 0 26 26"><use href="#sunu"/></svg></span>
<span class="t"><svg viewBox="0 0 26 26"><use href="#sund"/></svg></span>
<span class="t"><svg viewBox="0 0 26 26"><use href="#conu"/></svg></span>
<span class="t"><svg viewBox="0 0 26 26"><use href="#cond"/></svg></span>
<span class="t"><svg viewBox="0 0 26 26"><use href="#gridc"/></svg></span>
</div>

<div class="bar last">
<i class="grip first"></i>
<span class="t"><svg viewBox="0 0 26 26"><use href="#arc"/></svg></span><i class="dd off"></i>
<span class="t"><svg viewBox="0 0 26 26"><use href="#circ"/></svg></span><i class="dd off"></i>
<span class="t"><svg viewBox="0 0 26 26"><use href="#ell"/></svg></span><i class="dd off"></i>
<span class="t"><svg viewBox="0 0 26 26"><use href="#rct"/></svg></span><i class="dd off"></i>
<span class="t"><svg viewBox="0 0 26 26"><use href="#reg"/></svg></span><i class="dd off"></i>
<i class="grip"></i>
</div>

<main class="main">
<aside class="side">
<div class="hgrip"></div>
<div class="s"><svg viewBox="0 0 26 26"><use href="#vec"/><use href="#ad"/></svg></div>
<div class="s"><svg viewBox="0 0 26 26"><use href="#raster"/><use href="#ad"/></svg></div>
<div class="s"><svg viewBox="0 0 26 26"><use href="#delim"/><use href="#ad"/></svg></div>
<div class="s"><svg viewBox="0 0 26 26"><use href="#feather"/><use href="#ad"/></svg></div>
<div class="s"><svg viewBox="0 0 26 26"><use href="#virt"/><use href="#ad"/></svg></div>
<div class="s"><svg viewBox="0 0 26 26"><use href="#pg"/><use href="#ad"/></svg><i class="dd"></i></div>
<div class="s"><svg viewBox="0 0 26 26"><use href="#globe"/><use href="#ad"/></svg><i class="dd"></i></div>
<div class="s"><svg viewBox="0 0 26 26"><use href="#gwcs"/><use href="#ad"/></svg></div>
<div class="s"><svg viewBox="0 0 26 26"><use href="#gwfs"/><use href="#ad"/></svg><i class="dd"></i></div>
<div class="s"><svg viewBox="0 0 26 26"><use href="#vec"/><use href="#st"/></svg><i class="dd"></i></div>
</aside>

<section class="dock">
<div class="ph">浏览<span class="fl"></span></div>
<div class="pt">
<span class="p"><svg viewBox="0 0 26 26"><use href="#nsq"/></svg></span>
<span class="p"><svg viewBox="0 0 26 26"><use href="#refresh"/></svg></span>
<span class="p"><svg viewBox="0 0 26 26"><use href="#filter"/></svg></span>
<span class="p"><svg viewBox="0 0 26 26"><use href="#collapse"/></svg></span>
<span class="p"><svg viewBox="0 0 26 26"><use href="#info"/></svg></span>
</div>
<div class="tree browser">
<div class="r"><i class="tw"></i><svg viewBox="0 0 26 26"><use href="#db2"/></svg><span>DB2</span></div>
<div class="r"><i class="tw"></i><svg viewBox="0 0 26 26"><use href="#globe"/></svg><span>WMS/WMTS</span></div>
<div class="r"><i class="tw down"></i><svg viewBox="0 0 26 26"><use href="#globe"/></svg><span>XYZ Tiles</span></div>
<div class="r kid"><svg viewBox="0 0 24 24"><use href="#rl"/></svg><span>google地图</span></div>
<div class="r kid"><svg viewBox="0 0 24 24"><use href="#rl"/></svg><span>OpenStreetMap</span></div>
<div class="r kid"><svg viewBox="0 0 24 24"><use href="#rl"/></svg><span>谷歌</span></div>
<div class="r kid"><svg viewBox="0 0 24 24"><use href="#rl"/></svg><span>高德地图</span></div>
<div class="r"><i class="tw"></i><svg viewBox="0 0 26 26"><use href="#gwcs"/></svg><span>WCS</span></div>
<div class="r"><i class="tw right"></i><svg viewBox="0 0 26 26"><use href="#gwfs"/></svg><span>WFS</span></div>
<div class="r"><i class="tw right"></i><svg viewBox="0 0 26 26"><use href="#gwf"/></svg><span>OWS</span></div>
</div>
<div class="split"></div>
<div class="ph">空间书签<span class="fl"></span></div>
<div class="pt t30">
<span class="p"><svg viewBox="0 0 26 26"><use href="#z11"/></svg></span>
<span class="p"><svg viewBox="0 0 26 26"><use href="#bknew"/></svg></span>
<span class="p"><svg viewBox="0 0 26 26"><use href="#trashr"/></svg></span>
<span class="p"><svg viewBox="0 0 26 26"><use href="#share"/></svg></span>
</div>
<div class="tbl">
<div class="th"><span class="c1">名称<i class="sort"></i></span><span class="c2">项目</span></div>
<div class="td"><span class="c1">Europe</span><span class="c2">beijing_test</span></div>
<div class="td alt"><span class="c1">wgs84_europe</span></div>
<div class="td alt2"><span class="c1">北京</span></div>
</div>
<div class="hsb"><span class="sl"><i></i></span><span class="th2"></span></div>
<div class="split short"></div>
<div class="ph ph23">图层<span class="fl"></span></div>
<div class="pt lay">
<span class="p"><svg viewBox="0 0 26 26"><use href="#brush"/></svg></span>
<span class="p"><svg viewBox="0 0 26 26"><use href="#addgrp"/></svg></span>
<span class="p"><svg viewBox="0 0 26 26"><use href="#eye"/></svg></span>
<span class="p"><svg viewBox="0 0 26 26"><use href="#filter"/></svg></span>
<span class="p"><svg viewBox="0 0 26 26"><use href="#eps"/></svg></span><i class="dd"></i>
<span class="p"><svg viewBox="0 0 26 26"><use href="#expand"/></svg></span>
<span class="p"><svg viewBox="0 0 26 26"><use href="#collapse"/></svg></span>
<span class="p"><svg viewBox="0 0 26 26"><use href="#nsqr"/></svg></span>
</div>
<div class="tree layers">
<div class="l"><i class="tw"></i><i class="cb on"><svg viewBox="0 0 16 16"><use href="#ck"/></svg></i><svg class="sym" viewBox="0 0 24 24"><use href="#ptb"/></svg><b>beijing</b></div>
<div class="l mute"><i class="tw"></i><i class="cb"></i><svg class="sym" viewBox="0 0 18 18"><rect x="0.500" y="0.500" width="17" height="17" class="polyfill"/></svg><b class="in2">多边形</b><svg class="cp" viewBox="0 0 26 26"><use href="#chipg"/></svg></div>
<div class="l mute"><i class="tw"></i><i class="cb"></i><svg class="sym" viewBox="0 0 18 18"><path d="M0 9h18" class="lineg"/></svg><b class="in2">路径</b><svg class="cp" viewBox="0 0 26 26"><use href="#chipg"/></svg></div>
<div class="l mute"><i class="tw"></i><i class="cb"></i><svg class="sym" viewBox="0 0 26 26"><use href="#feat"/></svg><b>flag3</b></div>
<div class="l mute"><i class="tw"></i><i class="cb"></i><svg class="sym" viewBox="0 0 18 18"><circle cx="9" cy="9" r="5" class="dotp"/></svg><b class="in3">flag</b></div>
<div class="l mute"><i class="tw"></i><i class="cb"></i><svg class="sym" viewBox="0 0 18 18"><path d="M0 9h18" class="liner"/></svg><b class="in2">路径</b><svg class="cp" viewBox="0 0 26 26"><use href="#chipg"/></svg></div>
<div class="l tall"><i class="tw right"></i><i class="cb on"><svg viewBox="0 0 16 16"><use href="#ck"/></svg></i><svg class="sym" viewBox="0 0 18 18"><circle cx="5" cy="10" r="1.500" class="dots"/><circle cx="14" cy="3" r="1.500" class="dots"/><circle cx="3" cy="16" r="1.500" class="dots"/></svg><b class="in3">等级景区</b></div>
<div class="l tall mute"><i class="tw"></i><i class="cb"></i><svg class="sym" viewBox="0 0 24 24"><use href="#rl"/></svg><b class="in3">北京市基础地理底图(…</b></div>
<div class="l tall"><i class="tw down"></i><i class="cb on"><svg viewBox="0 0 16 16"><use href="#ck"/></svg></i><svg class="sym" viewBox="0 0 24 24"><use href="#rl"/></svg><b class="in3">谷歌</b></div>
</div>
</section>

<section class="cv">
<svg class="map" viewBox="0 0 871 443"><g transform="translate(-273 -200)">
<g class="mk">
<circle cx="1135" cy="206" r="9"/><circle cx="1095" cy="240" r="8"/>
<circle cx="1112" cy="310" r="9"/><circle cx="1105" cy="322" r="9"/><circle cx="1112" cy="329" r="9"/>
<circle cx="1097" cy="350" r="9" class="mt"/><circle cx="1133" cy="358" r="7" class="mg"/><circle cx="1142" cy="370" r="8" class="mg"/>
<circle cx="1132" cy="382" r="9"/><circle cx="1100" cy="401" r="9"/><circle cx="1096" cy="412" r="7" class="mt"/><circle cx="1142" cy="388" r="8"/>
<circle cx="1103" cy="357" r="11" class="mo"/><circle cx="1123" cy="349" r="9"/>
</g>
<g class="red"><circle cx="1098" cy="381" r="14"/><circle cx="1102" cy="381" r="14"/><circle cx="1106" cy="381" r="14"/><circle cx="1109" cy="382" r="12"/><circle cx="1111" cy="382" r="10"/></g>
<rect x="1096" y="376" width="20" height="8" class="redb"/>
<circle cx="1122" cy="389" r="11" class="mo2"/>
<g class="lab">
<text x="1097" y="233">温都水城</text><text x="1094" y="288">园</text><text x="1116" y="303">中国科</text><text x="1090" y="316">半民族园</text><text x="1108" y="352">恭王府</text><text x="1117" y="368">景山</text><text x="1118" y="398">北京</text><text x="1116" y="412">龙潭</text><text x="1090" y="432">世界花卉大</text><text x="1097" y="453">汉墓博物</text><text x="1095" y="469">园</text><text x="1094" y="486">印刷博物</text>
</g>
</g></svg>
<div class="msgp"></div>
<div class="white"></div>
<div class="strip"></div>
<div class="con"><span class="cg1"></span><span class="cg2"></span><span class="prompt">&gt;&gt;&gt;</span></div>
</section>
</main>

<div class="dlg">
<div class="dt"><svg viewBox="0 0 24 24"><use href="#q"/></svg><span class="dtt">数据源管理器 | 分隔文本文件</span><span class="dq">?</span><svg class="dx" viewBox="0 0 12 12"><path d="M1 1l10 10M11 1L1 11"/></svg></div>
<div class="db">
<ul class="nav">
<li><svg viewBox="0 0 26 26"><use href="#open"/></svg>浏览</li>
<li><svg viewBox="0 0 26 26"><use href="#vec"/><use href="#ad"/></svg>矢量</li>
<li><svg viewBox="0 0 26 26"><use href="#raster"/><use href="#ad"/></svg>栅格</li>
<li><svg viewBox="0 0 26 26"><use href="#mesh"/><use href="#ad"/></svg>Mesh</li>
<li class="cur"><svg viewBox="0 0 26 26"><use href="#delim"/><use href="#ad"/></svg>分隔文本文件</li>
<li><svg viewBox="0 0 26 26"><use href="#gpkg"/><use href="#ad"/></svg>GeoPackage</li>
<li><svg viewBox="0 0 26 26"><use href="#feather"/><use href="#ad"/></svg>SpatiaLite</li>
<li><svg viewBox="0 0 26 26"><use href="#pg"/><use href="#ad"/></svg>PostgreSQL</li>
<li><svg viewBox="0 0 26 26"><use href="#mssql"/><use href="#ad"/></svg>MSSQL</li>
<li><svg viewBox="0 0 26 26"><use href="#oracle"/><use href="#ad"/></svg>Oracle</li>
<li><svg viewBox="0 0 26 26"><use href="#db2"/><use href="#ad"/></svg>DB2</li>
<li><svg viewBox="0 0 26 26"><use href="#virt"/><use href="#ad"/></svg>虚拟图层</li>
<li><svg viewBox="0 0 26 26"><use href="#globe"/><use href="#ad"/></svg>WMS/WMTS</li>
<li><svg viewBox="0 0 26 26"><use href="#gwcs"/><use href="#ad"/></svg>WCS</li>
<li><svg viewBox="0 0 26 26"><use href="#gwfs"/><use href="#ad"/></svg>WFS</li>
<li><svg viewBox="0 0 26 26"><use href="#globe"/><use href="#arcb"/><use href="#ad"/></svg>ArcGIS地图服务器</li>
<li><svg viewBox="0 0 26 26"><use href="#gwfs"/><use href="#arcb"/><use href="#ad"/></svg>ArcGIS要素服务器</li>
<li><svg viewBox="0 0 26 26"><use href="#geon"/><use href="#ad"/></svg>GeoNode</li>
</ul>
<div class="pane">
<div class="fr"><label class="fl1">文件名称</label><span class="inp grow"></span><span class="dots3">...</span></div>
<div class="fr mt7"><label class="fl1">图层名称</label><span class="inp w331"></span><label class="enc">编码</label><span class="combo grow"><span>GBK</span></span></div>
<div class="frame">
<div class="sh first"><i class="arw"></i><b>文件格式</b></div>
<div class="gb g1">
<div class="ro"><i class="rd on"></i><span><span class="m">CSV</span>格式（值用逗号分隔）</span></div>
<div class="ro"><i class="rd"></i><span>分隔符为正则表达式</span></div>
<div class="ro"><i class="rd"></i><span>自定义分隔符</span></div>
</div>
<div class="sh"><i class="arw"></i><b class="mh">Record and Fields Options</b></div>
<div class="gb g2">
<div class="sk"><span class="skl">从文件开头起忽略的行数</span><span class="spin"><span>0</span><i class="spb"></i></span></div>
<div class="ch"><i class="cb"></i><span>小数点为逗号</span></div>
<div class="ch"><i class="cb on"><svg viewBox="0 0 16 16"><use href="#ck"/></svg></i><span>首行包含字段名称</span></div>
<div class="ch"><i class="cb"></i><span>裁剪字段前后的空格</span></div>
<div class="ch"><i class="cb on"><svg viewBox="0 0 16 16"><use href="#ck"/></svg></i><span class="m">Detect field types</span></div>
<div class="ch"><i class="cb"></i><span>忽略空字段</span></div>
</div>
<div class="sh"><i class="arw"></i><b class="mh">Geometry Definition</b></div>
<div class="gb g3">
<div class="gtop">
<div class="gl">
<div class="ro r26"><i class="rd on"></i><span>点坐标</span></div>
<div class="ro r26"><i class="rd"></i><span><span class="m">WKT</span>文本</span></div>
<div class="ro r26"><i class="rd"></i><span>无几何图形（属性表）</span></div>
</div>
<div class="gr">
<div class="fr"><label class="xl">横坐标</label><span class="combo grow"></span></div>
<div class="fr mt7"><label class="xl">纵坐标</label><span class="combo grow"></span></div>
<div class="fr r24 ml42"><i class="cb"></i><span class="lbl6">度分秒格式坐标</span></div>
</div>
</div>
<div class="gbot"><label class="crsl">几何坐标参照系</label><span class="combo crs"><span class="m">EPSG:4326 - WGS 84</span></span><span class="crsb"><svg viewBox="0 0 26 26"><use href="#gedit"/></svg></span></div>
</div>
<div class="sh ls"><i class="arwr"></i><b class="mh">Layer Settings</b></div>
<div class="sd"><b class="mh">Sample Data</b></div>
<div class="gb g4"><div class="ta"></div></div>
</div>
<div class="status">请选择一个输入文件</div>
<div class="btns"><span class="btn m">Close</span><span class="btn dis">添加<span class="m">(A)</span></span><span class="btn m">Help</span></div>
</div>
</div>
</div>

<svg class="arrows" viewBox="0 0 1144 974">
<path d="M40 108L59 121 52 123 79 203 47 127 44 133z"/>
<path d="M256 383L250 401 245 394 160 465 241 388 236 387z"/>
<path d="M932 239L949 251 941 252 1008 375 934 251 932 257z"/>
<path d="M526 603L516 622 512 613 405 685 508 608 504 604z"/>
<path d="M714 617L708 634 704 628 636 711 699 624 696 622z"/>
</svg>
</body>
</html>
```
FILE: styles.css
```css
*{box-sizing:border-box}
html,body{margin:0;padding:0}
body{width:1144px;height:974px;overflow:hidden;position:relative;background:#fff;font:13px "Noto Sans","Noto Sans CJK SC",sans-serif;color:#111}
.defs{position:absolute;width:0;height:0}
.ic{font-family:"Liberation Serif","Noto Sans CJK SC",serif}
.iw{fill:#fff;font-weight:700}
.ii{font-style:italic}
svg{flex:none}

.title{height:24px;display:flex;align-items:center;padding-left:1px;color:#808080;font-size:13px}
.titleq{width:18px;height:18px;margin-right:5px}
.menu{height:21px;background:#eee;border-bottom:1px solid #ccc;display:flex;align-items:center;padding-left:4px;color:#9a9a9a;font-size:12px}
.menu span{padding:0 8px}

.bar{height:39px;display:flex;align-items:center;background:linear-gradient(#fff,#f0f0f0);border-bottom:2px solid #c2c2c2;overflow:hidden}
.bar.last{height:38px}
.t{flex:none;width:33px;height:33px;display:flex;align-items:center;justify-content:center;border:1px solid transparent;border-radius:3px}
.t svg{width:26px;height:26px}
.t.on{background:#e2e2e2;border-color:#a8a8a8}
.t.off svg{filter:grayscale(1) opacity(.55)}
.grip{flex:none;width:18px;height:22px;display:block;position:relative}
.grip::before{content:"";position:absolute;left:6px;top:0;width:6px;height:22px;background-image:radial-gradient(circle,#aaa .8px,transparent 1px);background-size:3px 3px}
.grip.first{width:14.5px}
.grip.first::before{left:5px}
.g19{width:19px}.g17{width:17px}.g15{width:15px}.g20{width:20px}
.dd{flex:none;width:15px;height:10px;display:block;position:relative}
.dd::before{content:"";position:absolute;left:1px;top:2px;border:5px solid transparent;border-top:6px solid #5a5a5a;border-bottom:0}
.dd.off::before{border-top-color:#aaa}

.main{display:flex;height:774px}
.side{width:55px;flex:none;background:linear-gradient(90deg,#fff,#efefef)}
.hgrip{height:6px;margin:6px 18px 1px 21px;background-image:radial-gradient(circle,#bbb .8px,transparent 1px);background-size:3px 3px}
.s{height:32px;display:flex;align-items:center;padding-left:6px}
.s svg{width:26px;height:26px}
.s .dd{margin-left:5px}

.dock{width:218px;flex:none;background:#f0f0f0;border-left:2px solid #bcbcbc;display:flex;flex-direction:column;overflow:hidden}
.ph{height:22px;flex:none;display:flex;align-items:center;justify-content:space-between;padding:0 0 2px 2px;font-size:12.300px;position:relative}
.ph23{height:23px}
.fl{width:10px;height:10px;border:1px solid #555;border-radius:2px;background:#f0f0f0;box-shadow:inset 3px -3px 0 -2px #888}
.pt{height:29px;flex:none;display:flex;align-items:center;padding:0 0 3px 2px}
.t30{height:30px}
.p{flex:none;width:25.500px;display:flex;justify-content:center}
.lay .p{width:25px}
.lay .p:first-child{margin-left:.5px}
.p svg{width:20px;height:20px}
.tree{background:#fff;border-top:1px solid #bcbcbc;border-right:1px solid #c8c8c8;overflow:hidden;font-size:12.400px}
.browser{height:215px;flex:none}
.r{height:22px;display:flex;align-items:center;padding-left:5px;white-space:nowrap}
.r svg{width:20px;height:20px;margin-right:6px}
.r .tw{margin-right:10px}
.kid{padding-left:54px}
.kid svg{width:17px;height:17px;margin-right:7px}
.tw{flex:none;width:12px;height:10px;display:block;position:relative}
.tw.down::before{content:"";position:absolute;left:1px;top:2px;border:5px solid transparent;border-top:6px solid #666;border-bottom:0}
.tw.right::before{content:"";position:absolute;left:3px;top:0;border:5px solid transparent;border-left:6px solid #666;border-right:0}
.split{height:7px;flex:none;position:relative}
.split.short{height:6px}
.split::before{content:"";position:absolute;left:110px;top:2px;width:16px;height:3px;background-image:radial-gradient(circle,#aaa .8px,transparent 1px);background-size:3px 3px}
.tbl{height:192px;flex:none;background:#fff;border-top:1px solid #bcbcbc;font-size:12.400px;overflow:hidden}
.th{height:20px;display:flex;background:linear-gradient(#fff,#eee);border-bottom:1px solid #c4c4c4;align-items:center}
.c1{flex:none;width:149px;padding-left:2px;position:relative;height:100%;display:flex;align-items:center;white-space:nowrap}
.th .c1{border-right:1px solid #c4c4c4}
.c2{padding-left:3px;white-space:nowrap}
.sort{position:absolute;left:136px;top:6px;border:5px solid transparent;border-bottom:6px solid #666;border-top:0}
.td{height:17px;display:flex;align-items:center}
.alt{background:#e8e6e2}
.alt2{background:#f2f2f2}
.hsb{height:17px;flex:none;background:#e6e6e6;border-top:1px solid #bcbcbc;border-bottom:1px solid #bcbcbc;display:flex}
.sl{width:17px;background:#f0f0f0;border-right:1px solid #c8c8c8;position:relative}
.sl i{position:absolute;left:5px;top:3px;border:5px solid transparent;border-right:6px solid #555;border-left:0}
.th2{width:39px;background:#f2f2f2;border-right:1px solid #c0c0c0}
.layers{flex:1}
.l{height:20px;display:flex;align-items:center;padding-left:5px;white-space:nowrap}
.l.tall{height:22px}
.l .tw{margin-right:10px}
.l b{font-weight:700;font-size:12.200px;margin-left:4px}
.l b.in2{margin-left:6px}
.l b.in3{margin-left:8px}
.mute b{color:#c4c4c4}
.sym{width:18px;height:18px;margin-left:7px}
.cp{width:15px;height:15px;margin-left:auto;margin-right:3px}
.cb{flex:none;width:16px;height:16px;display:block;background:#fff;border:1px solid #bdbdbd}
.cb svg{width:14px;height:14px;display:block}
.polyfill{fill:#f6fab8;stroke:#a8a860}
.lineg{stroke:#b8cc40;stroke-width:1.500}
.liner{stroke:#e06a88;stroke-width:1.500}
.dotp{fill:#8a4f9a;stroke:#555}
.dots{fill:#aaa;stroke:#777}

.cv{flex:1;min-width:0;display:flex;flex-direction:column}
.map{width:871px;height:443px;flex:none;border-top:1px solid #c8c8c8}
.mk circle{fill:#fdd78f;stroke:#2f6690;stroke-width:1.800}
.mk .mt{fill:#7fc8a8}
.mk .mg{fill:#d3eeb0}
.mk .mo{fill:#f59053}
.mo2{fill:#f59053;stroke:#2f6690;stroke-width:1.800}
.red circle{fill:#c4202c;stroke:#7a1018;stroke-width:1.200}
.redb{fill:#d03a30}
.lab text{font:13px "Noto Sans CJK SC",sans-serif;fill:#333}
.msgp{height:65px;flex:none;background:#f0f0f0;border-top:1px solid #c4c4c4;border-bottom:1px solid #c4c4c4}
.white{height:234px;flex:none;background:#fff}
.strip{height:5px;flex:none;background:#f0f0f0;border-top:1px solid #c4c4c4;border-bottom:1px solid #c4c4c4}
.con{flex:1;display:flex;background:#fff}
.cg1{width:17px;background:#e4e4e4;border-right:2px solid #c4c4c4}
.cg2{width:8px;background:#eee;border-right:1px solid #c4c4c4}
.prompt{font:bold 11px "Liberation Mono",monospace;color:#a07a50;padding:3px 0 0 2px}

.dlg{position:absolute;left:273px;top:185px;width:822px;height:769px;border:1px solid #0078d7;border-top:0;background:#f0f0f0;display:flex;flex-direction:column}
.dt{height:31px;flex:none;background:#0078d7;color:#fff;display:flex;align-items:center;padding-left:9px;font-size:12px;margin:0 -1px}
.dt svg{width:16px;height:16px}
.dtt{margin-left:5px;flex:1}
.dq{margin-right:36px;font-size:13px}
.dt .dx{width:12px;height:12px;margin-right:18px;stroke:#fff;stroke-width:1;fill:none}
.db{flex:1;display:flex;min-height:0}
.nav{list-style:none;margin:0;padding:0;width:222px;flex:none;background:#5c5c5c;color:#fff;font-size:12.200px}
.nav li{height:36px;display:flex;align-items:center;padding-left:3px;white-space:nowrap}
.nav li svg{width:29px;height:29px;margin-right:5px}
.nav .cur{background:#f0f0f0;color:#000;padding-left:11px}
.nav .cur svg{width:26px;height:26px;margin-right:3px}

.pane{flex:1;padding:14px 14px 0 15px;font:12px "Noto Sans CJK SC",sans-serif;color:#111;min-width:0;display:flex;flex-direction:column}
.m{font-family:"Liberation Mono",monospace;font-size:12px;letter-spacing:-1.200px}
.mh{font:bold 11.670px "Liberation Mono",monospace;color:#333}
.fr{display:flex;align-items:center;height:21px}
.mt7{margin-top:7px}
.grow{flex:1;min-width:0}
.fl1{width:55px;flex:none}
.inp{display:block;height:21px;background:#fff;border:1px solid #b4b4b4;border-radius:2px}
.w331{width:331px;flex:none}
.dots3{width:32px;height:19px;margin-left:8px;flex:none;background:linear-gradient(#fff,#eaeaea);border:1px solid #b4b4b4;border-radius:2px;text-align:center;font:bold 11px/12px "Liberation Sans",sans-serif}
.enc{width:31px;margin-left:7px;flex:none}
.combo{display:flex;align-items:center;height:21px;background:linear-gradient(#fff,#e8e8e8);border:1px solid #b4b4b4;border-radius:2px;padding-left:4px;position:relative;color:#444}
.combo::after{content:"";position:absolute;right:10px;top:7px;border:5px solid transparent;border-top:6px solid #555;border-bottom:0}
.crs::after{top:9px}
.frame{margin-top:7px;height:608px;flex:none;border:1px solid #b8b8b8;padding:0 11px 0 12px;background:#eee}
.sh{height:27px;display:flex;align-items:center;padding:1px 0 0 1px}
.sh.first{height:32px;padding-top:5px}
.sh b{font-weight:700;font-size:12px}
.sh b.mh{font-size:11.670px}
.arw{width:0;height:0;border:6px solid transparent;border-top:8px solid #333;border-bottom:0;margin:0 10px 0 0}
.arwr{width:0;height:0;border:6px solid transparent;border-left:8px solid #333;border-right:0;margin:0 11px 0 2px}
.gb{border:1px solid #d8d8d8;border-radius:2px;background:#ececec}
.g1{height:111px;padding:9px 0 0 14px}
.ro{height:30px;display:flex;align-items:center}
.r26{height:26px}
.rd{flex:none;width:16px;height:16px;display:block;border-radius:50%;background:#fff;border:1px solid #aaa;position:relative;margin-right:7px}
.rd.on{border-color:#bbb}
.rd.on::after{content:"";position:absolute;left:3px;top:3px;width:8px;height:8px;border-radius:50%;background:#333}
.g2{height:97px;padding:11px 0 0 12px;display:grid;grid-template-columns:261px 1fr;grid-template-rows:24px 28px 20px}
.sk{display:flex;align-items:center}
.skl{width:138px;flex:none}
.spin{width:107px;height:19px;background:#fff;border:1px solid #b4b4b4;border-radius:2px;display:flex;align-items:center;padding-left:3px;position:relative;font:12px "Liberation Mono",monospace}
.spb{position:absolute;right:0;top:0;bottom:0;width:16px;background:#eee;border-left:1px solid #c4c4c4}
.spb::before{content:"";position:absolute;left:3px;top:2px;border:5px solid transparent;border-bottom:6px solid #555;border-top:0}
.spb::after{content:"";position:absolute;left:3px;bottom:2px;border:5px solid transparent;border-top:6px solid #aaa;border-bottom:0}
.ch{display:flex;align-items:center;gap:7px}
.ch:nth-child(even){gap:5px}
.g3{height:133px;padding:10px 12px 0 12px}
.gtop{display:flex;height:79px}
.gl{width:155px;flex:none}
.gl .ro{padding-left:2px}
.gr{flex:1;padding-top:2px;min-width:0}
.xl{width:42px;flex:none}
.r24{height:24px;margin-top:4px}
.ml42{margin-left:42px}
.lbl6{margin-left:6px}
.gbot{display:flex;align-items:center;height:26px;margin-top:3px}
.crsl{width:155px;flex:none}
.crs{width:327px;height:26px;flex:none}
.crsb{width:28px;height:26px;margin-left:6px;flex:none;background:linear-gradient(#fff,#e8e8e8);border:1px solid #b4b4b4;border-radius:2px;display:flex;align-items:center;justify-content:center}
.crsb svg{width:22px;height:22px}
.ls{height:30px;padding-top:2px}
.sd{height:23px;padding:0 0 0 3px;line-height:19px}
.g4{height:115px;padding:12px 13px 0 12px;background:#eee}
.ta{height:88px;background:#fff;border:1px solid #b4b4b4}
.status{height:23px;display:flex;align-items:center;flex:none}
.btns{display:flex;justify-content:flex-end;gap:7px;height:21px;flex:none}
.btn{width:80px;height:21px;display:flex;align-items:center;justify-content:center;background:linear-gradient(#fff,#eaeaea);border:1px solid #b0b0b0;border-radius:2px}
.btn.dis{color:#9a9a9a;border-color:#ccc}

.arrows{position:absolute;left:0;top:0;width:1144px;height:974px;pointer-events:none;fill:#fb2417}
```
